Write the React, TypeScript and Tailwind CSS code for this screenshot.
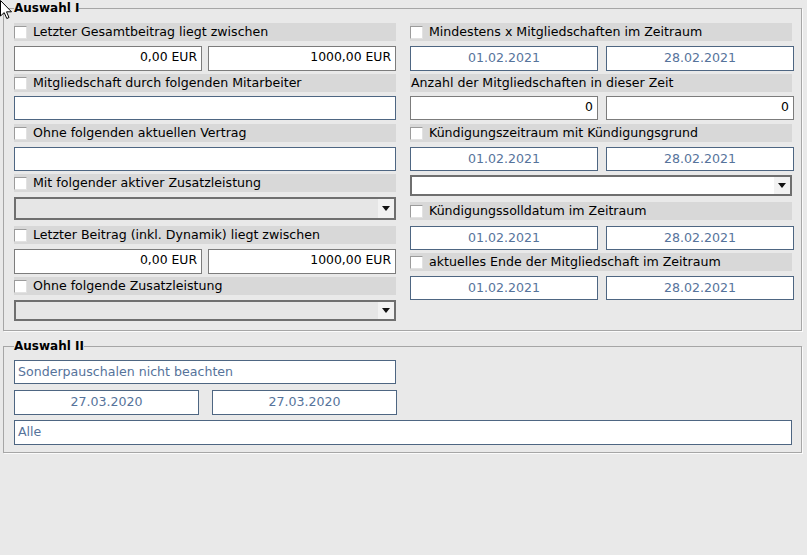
import React from "react";

const FONT = "font-['DejaVu_Sans',sans-serif]";

function Checkbox() {
  return (
    <span className="block w-[13px] h-[13px] shrink-0 bg-white border border-t-[#9b9b9b] border-l-[#9b9b9b] border-b-[#e2e2e2] border-r-[#e2e2e2] mt-[1px]" />
  );
}

function LabelRow({ text, check = true, cls = "" }: { text: string; check?: boolean; cls?: string }) {
  return (
    <div className={`h-[18px] bg-[#d8d8d8] flex items-center text-[12.6px] text-black leading-none ${cls}`}>
      {check ? <Checkbox /> : null}
      <span className={check ? "ml-[6px]" : "ml-[1px]"}>{text}</span>
    </div>
  );
}

function NumBox({ value, cls = "" }: { value: string; cls?: string }) {
  return (
    <div className={`flex-1 bg-white border border-[#7c7c7c] text-right pr-[4px] pt-[3px] text-[12.4px] leading-[14px] text-black ${cls}`}>
      {value}
    </div>
  );
}

function DateBox({ value, cls = "" }: { value: string; cls?: string }) {
  return (
    <div className={`flex-1 bg-white border border-[#4e6682] flex items-center justify-center text-[12.6px] text-[#56739b] leading-none ${cls}`}>
      {value}
    </div>
  );
}

function Arrow() {
  return (
    <svg width="8" height="5" viewBox="0 0 8 5">
      <polygon points="0,0 8,0 4,5" fill="#111" />
    </svg>
  );
}

function SelectBox({ bg, cls = "" }: { bg: string; cls?: string }) {
  return (
    <div className={`border-2 border-[#6f6f6f] flex justify-end ${bg} ${cls}`}>
      <div className="w-[16px] h-full bg-[#f2f2f2] flex items-center justify-center">
        <Arrow />
      </div>
    </div>
  );
}

function Cursor() {
  return (
    <svg className="absolute left-0 top-0" width="14" height="20" viewBox="0 0 14 20">
      <polygon
        points="0.5,0.5 0.5,16 4.2,12.6 6.8,18.5 9,17.5 6.5,11.8 11.5,11.8"
        fill="#fff"
        stroke="#000"
        strokeWidth="1"
        strokeLinejoin="miter"
      />
    </svg>
  );
}

export default function App() {
  return (
    <div className={`relative w-[807px] h-[555px] bg-[#e9e9e9] ${FONT} overflow-hidden`}>
      <div className="pl-[3px] pr-[5px] pt-[1px]">
        <fieldset className="border border-[#a6a6a6] pl-[10px] pr-[7px] pt-[8px] pb-[9px] shadow-[1px_1px_0_#fbfbfb]">
          <legend className="font-bold text-[12px] leading-[14px] text-black">Auswahl I</legend>
          <div className="flex gap-[14px]">
            {/* left column */}
            <div className="w-[382px] flex flex-col">
              <LabelRow text="Letzter Gesamtbeitrag liegt zwischen" />
              <div className="flex gap-[6px] mt-[5px] h-[25px]">
                <NumBox value="0,00 EUR" />
                <NumBox value="1000,00 EUR" />
              </div>
              <LabelRow text="Mitgliedschaft durch folgenden Mitarbeiter" cls="mt-[3px]" />
              <div className="mt-[4px] h-[24px] bg-white border border-[#4e6682]" />
              <LabelRow text="Ohne folgenden aktuellen Vertrag" cls="mt-[4px]" />
              <div className="mt-[5px] h-[24px] bg-white border border-[#4e6682]" />
              <LabelRow text="Mit folgender aktiver Zusatzleistung" cls="mt-[3px]" />
              <SelectBox bg="bg-[#e6e6e6]" cls="mt-[5px] h-[23px]" />
              <LabelRow text="Letzter Beitrag (inkl. Dynamik) liegt zwischen" cls="mt-[6px]" />
              <div className="flex gap-[6px] mt-[5px] h-[25px]">
                <NumBox value="0,00 EUR" />
                <NumBox value="1000,00 EUR" />
              </div>
              <LabelRow text="Ohne folgende Zusatzleistung" cls="mt-[3px]" />
              <SelectBox bg="bg-[#e6e6e6]" cls="mt-[5px] h-[21px]" />
            </div>
            {/* right column */}
            <div className="w-[384px] flex flex-col">
              <LabelRow text="Mindestens x Mitgliedschaften im Zeitraum" cls="w-[382px]" />
              <div className="flex gap-[8px] mt-[5px] h-[25px]">
                <DateBox value="01.02.2021" />
                <DateBox value="28.02.2021" />
              </div>
              <LabelRow text="Anzahl der Mitgliedschaften in dieser Zeit" check={false} cls="w-[382px] mt-[3px]" />
              <div className="flex gap-[8px] mt-[4px] h-[24px]">
                <NumBox value="0" />
                <NumBox value="0" />
              </div>
              <LabelRow text="Kündigungszeitraum mit Kündigungsgrund" cls="w-[382px] mt-[4px]" />
              <div className="flex gap-[8px] mt-[5px] h-[24px]">
                <DateBox value="01.02.2021" />
                <DateBox value="28.02.2021" />
              </div>
              <SelectBox bg="bg-white" cls="mt-[4px] h-[21px] w-[382px]" />
              <LabelRow text="Kündigungssolldatum im Zeitraum" cls="w-[382px] mt-[6px]" />
              <div className="flex gap-[8px] mt-[6px] h-[24px]">
                <DateBox value="01.02.2021" />
                <DateBox value="28.02.2021" />
              </div>
              <LabelRow text="aktuelles Ende der Mitgliedschaft im Zeitraum" cls="w-[382px] mt-[3px]" />
              <div className="flex gap-[8px] mt-[5px] h-[24px]">
                <DateBox value="01.02.2021" />
                <DateBox value="28.02.2021" />
              </div>
            </div>
          </div>
        </fieldset>

        <fieldset className="mt-[8px] border border-[#a6a6a6] pl-[10px] pr-[9px] pt-[7px] pb-[7px] shadow-[1px_1px_0_#fbfbfb]">
          <legend className="font-bold text-[12px] leading-[14px] text-black">Auswahl II</legend>
          <div className="flex flex-col">
            <div className="w-[382px] h-[24px] bg-white border border-[#4e6682] flex items-center pl-[3px] text-[12.6px] text-[#56739b] leading-none">
              Sonderpauschalen nicht beachten
            </div>
            <div className="flex gap-[13px] mt-[6px] h-[25px] w-[383px]">
              <DateBox value="27.03.2020" />
              <DateBox value="27.03.2020" />
            </div>
            <div className="mt-[5px] h-[25px] bg-white border border-[#4e6682] flex items-center pl-[3px] text-[12.6px] text-[#56739b] leading-none">
              Alle
            </div>
          </div>
        </fieldset>
      </div>
      <Cursor />
    </div>
  );
}
